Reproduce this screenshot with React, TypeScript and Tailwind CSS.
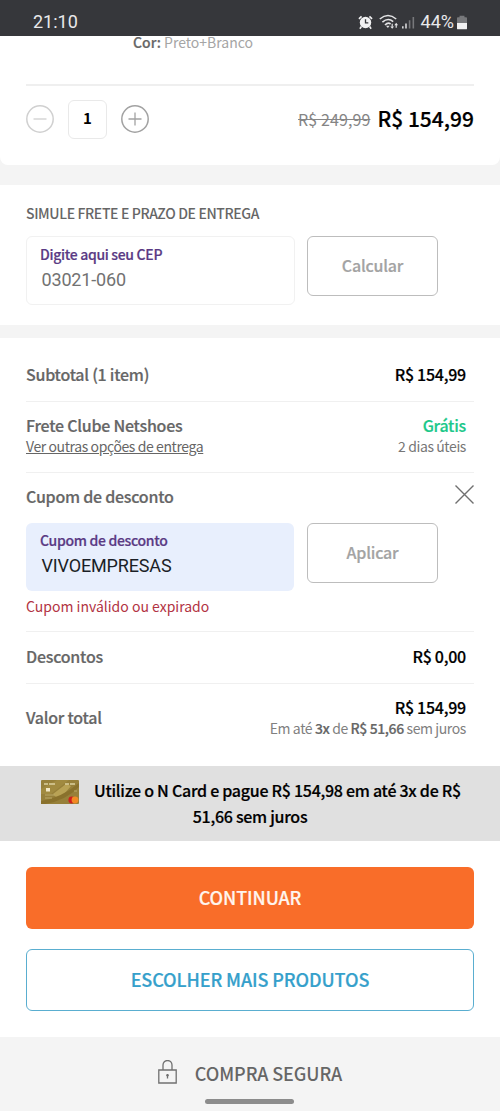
import type { ReactNode } from "react";

function StatusBar() {
    return (
        <header className="flex h-9 items-center justify-between bg-[#36373b] pl-[33px] pr-[33px] pt-2 font-['Roboto',sans-serif] text-[#e9e9eb]">
            <span className="text-[18px] leading-7">21:10</span>
            <div className="flex items-center">
                {/* alarm */}
                <svg width="15" height="15" viewBox="0 0 16 16" className="mr-[6px]">
                    <path d="M1 4.2 3.8 1.4M15 4.2 12.2 1.4M3.6 12.2 2 14.6M12.4 12.2 14 14.6" stroke="#f1f1f2" strokeWidth="1.7" />
                    <circle cx="8" cy="8" r="6.1" fill="#f1f1f2" />
                    <path d="M8 4.6V8.4H11" stroke="#36373b" strokeWidth="1.4" fill="none" />
                </svg>
                {/* wifi with transfer arrows */}
                <svg width="20" height="16" viewBox="0 0 20 16" className="mr-[3px]" fill="none">
                    <path d="M.8 5Q9 -2 17.200 5M3.400 8.200Q9 3.200 14.200 7.600M6 11Q9 8 11.600 10" stroke="#e3e3e5" strokeWidth="1.6" />
                    <path d="m8.900 14-1.900-2.200h3.600z" fill="#e3e3e5" />
                    <path d="m13.200 14.800-1.900-2.400h3.800zM17.200 8.800l-1.900 2.400h3.800z" fill="#e3e3e5" />
                    <path d="M13.200 9.800v3M17.200 10.800v3" stroke="#e3e3e5" strokeWidth="1.2" />
                </svg>
                {/* signal */}
                <svg width="13" height="13" viewBox="0 0 14 13" className="mr-[6px]">
                    <path d="M.9 10.500V13M4.300 7.500V13" stroke="#e3e3e5" strokeWidth="1.6" />
                    <path d="M8.200 4V13M12.200 .5V13" stroke="#77787b" strokeWidth="1.7" />
                </svg>
                <span className="text-[18px] leading-7">44%</span>
                {/* battery */}
                <svg width="10" height="15" viewBox="0 0 11 15" className="ml-[3px]">
                    <path d="M2.8 0h5.4v1.6H10a1 1 0 0 1 1 1V8H0V2.600a1 1 0 0 1 1-1h1.800z" fill="#77787b" />
                    <path d="M0 8h11v6a1 1 0 0 1-1 1H1a1 1 0 0 1-1-1z" fill="#f1f1f2" />
                </svg>
            </div>
        </header>
    );
}

function RoundButton({ plus }: { plus?: boolean }) {
    return (
        <button className={plus ? "text-[#a2a2a2]" : "text-[#d0d0d0]"}>
            <svg width="28" height="28" viewBox="0 0 28 28" fill="none" stroke="currentColor">
                <circle cx="14" cy="14" r="13.2" strokeWidth="1.5" />
                <path d={plus ? "M7.500 14H20.500M14 7.500V20.500" : "M7.500 14H20.500"} strokeWidth="1.3" />
            </svg>
        </button>
    );
}

function Field({ label, value, filled }: { label: string; value: string; filled?: boolean }) {
    return (
        <div
            className={
                filled
                    ? "h-[68px] w-[268px] rounded-md bg-[#e8effd] pl-3.5 pt-1.5 text-[#1b1f27]"
                    : "h-[69px] w-[269px] rounded-md border border-[#f1f1f1] pl-[13px] pt-1.5 text-[#727272]"
            }
        >
            <label className="block text-sm font-medium leading-[22px] tracking-[-0.31px] text-[#5a3a84] [-webkit-text-stroke:0.2px]">{label}</label>
            <div className="pl-[1.5px] pt-px font-['Roboto',sans-serif] text-lg leading-7 tracking-[-0.16px]">{value}</div>
        </div>
    );
}

function OutlineButton({ children }: { children: ReactNode }) {
    return (
        <button className="h-[60px] w-[131px] rounded-md border border-[#bdbdbd] pb-0.5 text-base font-medium tracking-[-0.2px] text-[#a3a3a3] [-webkit-text-stroke:0.2px]">
            {children}
        </button>
    );
}

function NCard() {
    return (
        <svg width="38" height="24" viewBox="0 0 38 24">
            <rect width="38" height="24" rx="1" fill="#97803a" />
            <path d="M12 14 25 4l5 2-12 14z" fill="#b9a255" />
            <path d="M16 0h12L10 14H0V9z" fill="#a18a40" />
            <path d="M0 21Q20 18 38 3v4Q24 21 4 24H0z" fill="#89712c" />
            <path d="M3 4h4M8 4h6M24 4h4M29 4h5" stroke="#dccf9f" strokeWidth="1.500" />
            <rect x="5" y="8" width="4" height="3.500" fill="#f2e7c4" />
            <path d="M4 15h10M4 18h7M33 11h3" stroke="#bba968" />
            <circle cx="30.800" cy="20" r="3.400" fill="#cf1f1f" />
            <circle cx="34" cy="20" r="3.400" fill="#f28a24" />
        </svg>
    );
}

export default function App() {
    return (
        <div className="h-[1111px] w-[500px] overflow-hidden bg-[#f4f4f4] font-['Noto_Sans_CJK_SC','Noto_Sans_CJK_JP',sans-serif] text-[#666]">
            <StatusBar />

            {/* Product */}
            <section className="h-[129px] rounded-b-lg bg-white px-[26px]">
                <div className="h-[48px] pl-[107px] text-sm leading-[12px]">
                    <span className="font-medium [-webkit-text-stroke:0.2px]">Cor:</span> <span className="text-[#a5a5a5]">Preto+Branco</span>
                </div>
                <div className="h-0.5 bg-[#efefef]" />
                <div className="mt-[13px] flex h-10 items-center">
                    <RoundButton />
                    <div className="mx-[14px] flex h-[39px] w-[39px] items-center justify-center rounded-md border border-[#e9e9e9] pb-px text-[15px] font-bold text-black">1</div>
                    <RoundButton plus />
                    <div className="ml-auto flex items-center">
                        <s className="mr-[7px] text-[16px] tracking-[0.1px] text-[#858585]">R$ 249,99</s>
                        <span className="pb-0.5 text-[21px] font-medium leading-8 text-black [-webkit-text-stroke:0.2px]">R$ 154,99</span>
                    </div>
                </div>
            </section>

            {/* Shipping */}
            <section className="mt-5 h-[140px] bg-white px-[26px] pt-[17px]">
                <h2 className="text-sm font-medium leading-[22px] tracking-[-0.37px]">SIMULE FRETE E PRAZO DE ENTREGA</h2>
                <div className="mt-[12px] flex gap-3">
                    <Field label="Digite aqui seu CEP" value="03021-060" />
                    <OutlineButton>Calcular</OutlineButton>
                </div>
            </section>

            {/* Summary */}
            <section className="mt-[13px] h-[428px] bg-white px-[26px] tracking-[-0.25px]">
                <div className="flex h-16 items-center justify-between border-b border-[#f0f0f0] pr-2 pt-2 text-base font-medium [-webkit-text-stroke:0.2px]">
                    <span>Subtotal (1 item)</span>
                    <span className="text-black">R$ 154,99</span>
                </div>
                <div className="flex h-[71px] justify-between border-b border-[#f0f0f0] pr-2 pt-3">
                    <div>
                        <p className="text-base font-medium leading-[22px] [-webkit-text-stroke:0.2px]">Frete Clube Netshoes</p>
                        <p className="text-sm leading-[20px] tracking-[-0.4px] underline">Ver outras opções de entrega</p>
                    </div>
                    <div className="text-right">
                        <p className="text-base font-medium leading-[22px] text-[#1cc88a] [-webkit-text-stroke:0.2px]">Grátis</p>
                        <p className="text-sm leading-[20px] tracking-[-0.4px] text-[#777]">2 dias úteis</p>
                    </div>
                </div>
                <div className="h-[159px] border-b border-[#f0f0f0] pt-3">
                    <div className="flex h-[22px] items-center justify-between">
                        <span className="text-base font-medium [-webkit-text-stroke:0.2px]">Cupom de desconto</span>
                        <svg width="19" height="19" viewBox="0 0 19 19" stroke="#707070" strokeWidth="1.400" className="mb-[3px]">
                            <path d="M.5.500 18.500 18.500M18.500.500.500 18.500" />
                        </svg>
                    </div>
                    <div className="mt-4 flex gap-[13px]">
                        <Field label="Cupom de desconto" value="VIVOEMPRESAS" filled />
                        <div className="flex h-[59px]">
                            <OutlineButton>Aplicar</OutlineButton>
                        </div>
                    </div>
                    <p className="mt-[5px] text-sm leading-5 tracking-normal text-[#b23343]">Cupom inválido ou expirado</p>
                </div>
                <div className="flex h-[52px] items-center justify-between border-b border-[#f0f0f0] pb-1 pr-2 text-base font-medium [-webkit-text-stroke:0.2px]">
                    <span>Descontos</span>
                    <span className="text-black">R$ 0,00</span>
                </div>
                <div className="flex items-center justify-between pr-2 pt-3">
                    <span className="text-base font-medium [-webkit-text-stroke:0.2px]">Valor total</span>
                    <div className="text-right">
                        <p className="text-base font-medium leading-[22px] text-black [-webkit-text-stroke:0.2px]">R$ 154,99</p>
                        <p className="text-sm leading-[20px] tracking-[-0.4px] text-[#808080]">
                            Em até <b className="font-medium text-[#666] [-webkit-text-stroke:0.2px]">3x</b> de <b className="font-medium text-[#666] [-webkit-text-stroke:0.2px]">R$ 51,66</b> sem juros
                        </p>
                    </div>
                </div>
            </section>

            <section className="flex h-[75px] bg-[#e0e0e0] pl-[41px] pt-[11px] text-black">
                <div className="pt-[3px]"><NCard /></div>
                <p className="-ml-[20px] w-[382px] text-center text-base font-medium leading-[26px] tracking-[-0.27px] [-webkit-text-stroke:0.2px]">
                    <span className="ml-[35px] whitespace-nowrap">Utilize o N Card e pague R$ 154,98 em até 3x de R$</span>
                    <br />
                    51,66 sem juros
                </p>
            </section>

            <section className="flex h-[196px] flex-col gap-5 bg-white px-[26px] pt-[26px] tracking-[-0.1px]">
                <button className="h-[62px] rounded-md bg-[#f96d29] pb-0.5 text-lg font-medium text-[#fff5ee] [-webkit-text-stroke:0.2px]">CONTINUAR</button>
                <button className="h-[62px] rounded-md border border-[#5aaed0] pb-0.5 text-lg font-medium text-[#35a0cb] [-webkit-text-stroke:0.2px]">ESCOLHER MAIS PRODUTOS</button>
            </section>

            <footer className="flex h-[74px] flex-col items-center">
                <div className="flex h-[62px] items-center pt-[10px]">
                    <svg width="19" height="24" viewBox="0 0 19 24" fill="none" stroke="#707070" strokeWidth="1.300" className="mb-0.5 mr-[18px]">
                        <path d="M.8 10h17.400v13H.8zM5 10V5a4.500 4.500 0 0 1 9 0v5" />
                        <path d="M9.500 14v4.500" strokeWidth="1.300" />
                        <circle cx="9.500" cy="15.300" r="1.200" fill="#707070" stroke="none" />
                    </svg>
                    <span className="text-lg font-medium tracking-[-0.1px]">COMPRA SEGURA</span>
                </div>
                <div className="mr-px h-[5px] w-[89px] rounded-full bg-[#8c8c8c]" />
            </footer>
        </div>
    );
}
